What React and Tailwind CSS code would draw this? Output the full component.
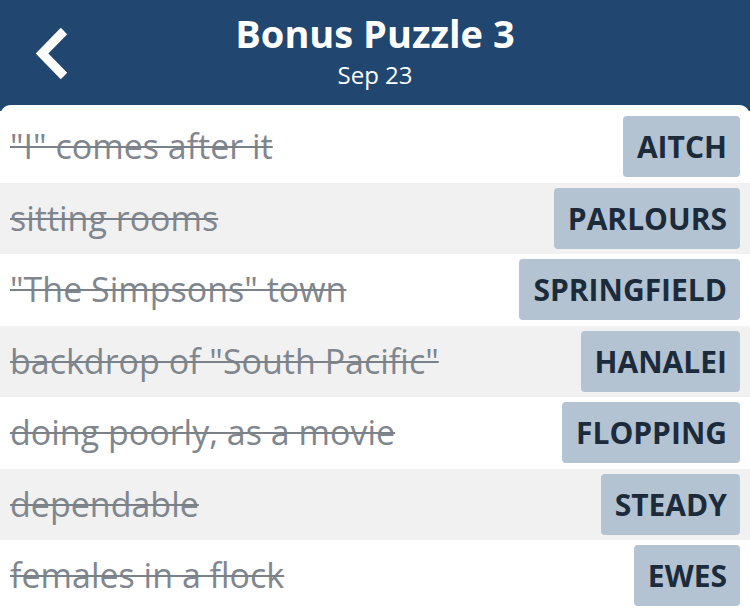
import React from "react";

const rows = [
  ['"I" comes after it', "AITCH"],
  ["sitting rooms", "PARLOURS"],
  ['"The Simpsons" town', "SPRINGFIELD"],
  ['backdrop of "South Pacific"', "HANALEI"],
  ["doing poorly, as a movie", "FLOPPING"],
  ["dependable", "STEADY"],
  ["females in a flock", "EWES"],
];

export default function App() {
  return (
    <div className="w-[750px] h-[608px] overflow-hidden bg-[#21466f] font-['Open_Sans',sans-serif]">
      <div className="relative h-[105px] flex flex-col items-center text-white pt-[5px]">
        <svg className="absolute left-0 top-0" width="80" height="105" viewBox="0 0 80 105">
          <path d="M64 31 L42 53.5 L64 76" fill="none" stroke="white" strokeWidth="9" strokeLinecap="butt" strokeLinejoin="miter" />
        </svg>
        <div className="text-[38px] leading-normal font-bold">Bonus Puzzle 3</div>
        <div className="mt-[-5px] text-[24px] leading-normal">Sep 23</div>
      </div>
      <div className="bg-white rounded-t-[11px] pt-[6px] h-[503px]">
        {rows.map(([clue, ans], i) => (
          <div
            key={i}
            className={`h-[71.5px] flex items-center justify-between pl-[10px] pr-[10px] ${i % 2 === 1 ? "bg-[#f1f1f1]" : "bg-white"}`}
          >
            <span className="text-[34px] leading-normal text-[#80868e] line-through decoration-[2px] decoration-[#7b8189]">{clue}</span>
            <span className="h-[61px] flex items-center pl-[14px] pr-[13px] rounded-[4px] bg-[#b3c3d1] text-[#1c2b3b] text-[30px] leading-normal font-bold">
              {ans}
            </span>
          </div>
        ))}
      </div>
    </div>
  );
}
